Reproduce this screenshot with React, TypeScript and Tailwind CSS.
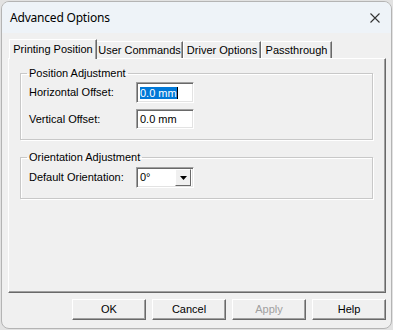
import React from "react";

const sunken =
  "border border-t-[#a0a0a0] border-l-[#a0a0a0] border-b-white border-r-white shadow-[inset_1px_1px_0_#696969,inset_-1px_-1px_0_#e3e3e3]";

function Btn({ label, disabled }: { label: string; disabled?: boolean }) {
  return (
    <div
      className={
        "w-[74px] h-[21px] flex items-center justify-center border border-t-white border-l-white border-b-[#696969] border-r-[#696969] shadow-[inset_-1px_-1px_0_#a0a0a0] bg-[#f0f0f0] " +
        (disabled ? "text-[#a0a0a0]" : "text-black")
      }
    >
      {label}
    </div>
  );
}

export default function App() {
  return (
    <div
      className="w-[393px] h-[330px] bg-[#e2e2e2] pt-px pl-px overflow-hidden text-[11px] text-black"
      style={{ fontFamily: '"Liberation Sans", Arial, sans-serif' }}
    >
      <div className="w-[391px] h-[328px] rounded-[8px] border border-[#b4b4b4] bg-[#f0f0f0] overflow-hidden flex flex-col">
        {/* title bar */}
        <div className="h-[31px] bg-[#eef3f8] flex items-center justify-between pl-[8px] pr-[10px] shrink-0">
          <span
            className="text-[12px] tracking-[-0.2px] text-black"
            style={{ fontFamily: '"Noto Sans", "Open Sans", sans-serif' }}
          >
            Advanced Options
          </span>
          <svg width="10" height="10" viewBox="0 0 10 10" className="mr-[1px]">
            <path d="M0.5 0.5 L9.5 9.5 M9.5 0.5 L0.5 9.5" stroke="#333" strokeWidth="1.1" />
          </svg>
        </div>

        {/* body */}
        <div className="flex flex-col pl-[6px] pt-[6px]">
          {/* tabs */}
          <div className="flex items-end h-[19px] w-[378px]">
            <div className="relative z-10 -mb-px ml-px w-[88px] h-[20px] bg-[#f0f0f0] border-t border-l border-t-white border-l-white border-r border-r-[#696969] shadow-[inset_-1px_0_0_#a0a0a0] flex items-center justify-center pb-[1px]">
              Printing Position
            </div>
            <div className="w-[86px] h-[17px] border-t border-t-white border-r border-r-[#696969] shadow-[inset_-1px_0_0_#a0a0a0] flex items-center justify-center">
              User Commands
            </div>
            <div className="w-[78px] h-[17px] border-t border-l border-t-white border-l-white border-r border-r-[#696969] shadow-[inset_-1px_0_0_#a0a0a0] flex items-center justify-center">
              Driver Options
            </div>
            <div className="w-[71px] h-[17px] border-t border-l border-t-white border-l-white border-r border-r-[#696969] shadow-[inset_-1px_0_0_#a0a0a0] flex items-center justify-center">
              Passthrough
            </div>
          </div>

          {/* panel */}
          <div className="w-[378px] h-[235px] border border-t-white border-l-white border-r-[#696969] border-b-[#696969] shadow-[inset_-1px_-1px_0_#a0a0a0] flex flex-col pl-[11px] pt-[8px]">
            <fieldset className="w-[353px] h-[73px] border border-[#c8c8c8] shadow-[inset_1px_1px_0_white,1px_1px_0_white] pl-[8px] pt-[2px] flex flex-col gap-[6px]">
              <legend className="-ml-[2px] px-[2px] leading-[13px]">Position Adjustment</legend>
              <div className="flex items-center h-[21px]">
                <span className="w-[107px]">Horizontal Offset:</span>
                <div className={"w-[58px] h-[21px] bg-white flex items-center pl-[3px] " + sunken}>
                  <span className="bg-[#0078d7] text-white leading-[12px]">0.0 mm</span>
                  <span className="w-px h-[12px] bg-black" />
                </div>
              </div>
              <div className="flex items-center h-[20px]">
                <span className="w-[107px]">Vertical Offset:</span>
                <div className={"w-[58px] h-[20px] bg-white flex items-center pl-[3px] " + sunken}>
                  0.0 mm
                </div>
              </div>
            </fieldset>

            <fieldset className="mt-[11px] w-[353px] h-[48px] border border-[#c8c8c8] shadow-[inset_1px_1px_0_white,1px_1px_0_white] pl-[8px] pt-[3px] flex flex-col">
              <legend className="-ml-[2px] px-[2px] leading-[13px]">Orientation Adjustment</legend>
              <div className="flex items-center h-[21px]">
                <span className="w-[107px]">Default Orientation:</span>
                <div className={"w-[58px] h-[21px] bg-white flex items-center justify-between pl-[3px] pr-[2px] " + sunken}>
                  <span>0°</span>
                  <div className="w-[16px] h-[17px] bg-[#f0f0f0] border border-t-white border-l-white border-b-[#696969] border-r-[#696969] flex items-center justify-center">
                    <svg width="7" height="4" viewBox="0 0 7 4">
                      <path d="M0 0 H7 L3.5 4 Z" fill="#000" />
                    </svg>
                  </div>
                </div>
              </div>
            </fieldset>
          </div>

          {/* buttons */}
          <div className="w-[378px] flex justify-end gap-[6px] mt-[6px]">
            <Btn label="OK" />
            <Btn label="Cancel" />
            <Btn label="Apply" disabled />
            <Btn label="Help" />
          </div>
        </div>
      </div>
    </div>
  );
}
